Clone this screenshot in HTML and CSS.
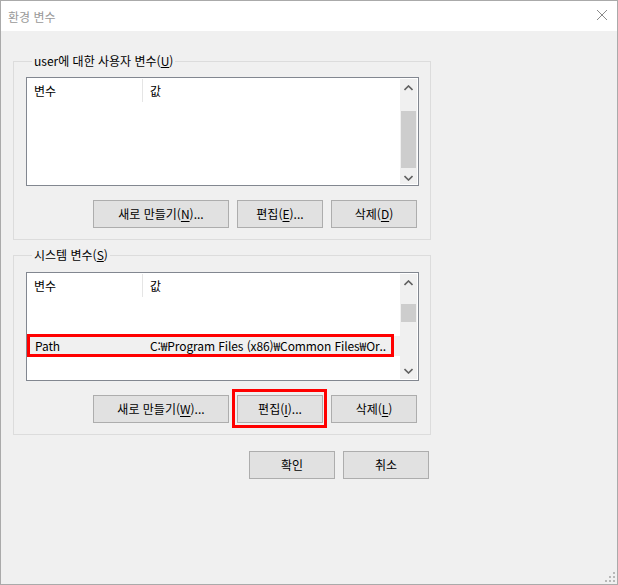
FILE: index.html
```html
<!DOCTYPE html>
<html lang="ko">
<head>
<meta charset="utf-8">
<title>환경 변수</title>
<link rel="stylesheet" href="styles.css">
</head>
<body>
<div class="window">
  <div class="titlebar">
    <span class="title">환경 변수</span>
    <svg class="close" width="12" height="12" viewBox="0 0 12 12"><path d="M1 1 L11 11 M11 1 L1 11" stroke="#8a8a8a" stroke-width="1" fill="none"/></svg>
  </div>
  <div class="content">
    <fieldset class="group group-user">
      <legend>user에 대한 사용자 변수(<u>U</u>)</legend>
      <div class="list">
        <div class="list-main">
          <div class="list-header">
            <div class="col-name">변수</div>
            <div class="col-value">값</div>
          </div>
        </div>
        <div class="scrollbar">
          <div class="arrow"><svg width="9" height="6" viewBox="0 0 9 6"><path d="M0.5 5 L4.5 1 L8.5 5" stroke="#606060" stroke-width="1.6" fill="none"/></svg></div>
          <div class="track track-user"><div class="thumb"></div></div>
          <div class="arrow"><svg width="9" height="6" viewBox="0 0 9 6"><path d="M0.5 1 L4.5 5 L8.5 1" stroke="#606060" stroke-width="1.6" fill="none"/></svg></div>
        </div>
      </div>
      <div class="btnrow">
        <button class="btn btn-wide">새로 만들기(<u>N</u>)...</button>
        <button class="btn">편집(<u>E</u>)...</button>
        <button class="btn">삭제(<u>D</u>)</button>
      </div>
    </fieldset>

    <fieldset class="group group-system">
      <legend>시스템 변수(<u>S</u>)</legend>
      <div class="list">
        <div class="list-main">
          <div class="list-header">
            <div class="col-name">변수</div>
            <div class="col-value">값</div>
          </div>
          <div class="row row-empty"></div>
          <div class="row row-empty"></div>
          <div class="row row-selected">
            <div class="col-name">Path</div>
            <div class="col-value">C:₩Program Files (x86)₩Common Files₩Or..</div>
          </div>
          <div class="mark mark-row"></div>
        </div>
        <div class="scrollbar">
          <div class="arrow"><svg width="9" height="6" viewBox="0 0 9 6"><path d="M0.5 5 L4.5 1 L8.5 5" stroke="#606060" stroke-width="1.6" fill="none"/></svg></div>
          <div class="track track-system"><div class="thumb"></div></div>
          <div class="arrow"><svg width="9" height="6" viewBox="0 0 9 6"><path d="M0.5 1 L4.5 5 L8.5 1" stroke="#606060" stroke-width="1.6" fill="none"/></svg></div>
        </div>
      </div>
      <div class="btnrow">
        <button class="btn btn-wide">새로 만들기(<u>W</u>)...</button>
        <span class="marked"><button class="btn">편집(<u>I</u>)...</button><span class="mark mark-btn"></span></span>
        <button class="btn">삭제(<u>L</u>)</button>
      </div>
    </fieldset>

    <div class="dialog-btns">
      <button class="btn">확인</button>
      <button class="btn">취소</button>
    </div>
  </div>
  <svg class="grip" width="10" height="10" viewBox="0 0 10 10">
    <rect x="8" y="0" width="2" height="2" fill="#b8b8b8"/>
    <rect x="4" y="4" width="2" height="2" fill="#b8b8b8"/>
    <rect x="8" y="4" width="2" height="2" fill="#b8b8b8"/>
    <rect x="0" y="8" width="2" height="2" fill="#b8b8b8"/>
    <rect x="4" y="8" width="2" height="2" fill="#b8b8b8"/>
    <rect x="8" y="8" width="2" height="2" fill="#b8b8b8"/>
  </svg>
</div>
</body>
</html>
```

FILE: styles.css
```css
* {
  box-sizing: border-box;
}

html, body {
  margin: 0;
  padding: 0;
  background: #f0f0f0;
}

body {
  font-family: "Noto Sans CJK KR", "Noto Sans", sans-serif;
  font-size: 12px;
  color: #000;
}

.window {
  position: relative;
  width: 618px;
  height: 585px;
  border: 1px solid #aaaaaa;
  background: #f0f0f0;
  overflow: hidden;
}

.titlebar {
  height: 30px;
  background: #ffffff;
  display: flex;
  align-items: center;
  justify-content: space-between;
  padding: 0 9px 0 7px;
}

.title {
  color: #999999;
  font-size: 12px;
  line-height: 16px;
  padding-top: 1px;
}

.close {
  display: block;
  margin-top: -2px;
}

.content {
  padding: 22px 0 0 12px;
}

.group {
  width: 418px;
  margin: 0;
  padding: 0 11px 11px 12px;
  border: 1px solid #dcdcdc;
  min-width: 0;
}

.group legend {
  margin-left: 6px;
  padding: 0 2px;
  font-size: 12px;
  line-height: 16px;
  color: #000;
}

.group-user .list {
  margin-top: 8px;
}

.group-system {
  margin-top: 7px;
}

.group-system .list {
  margin-top: 9px;
}

.list {
  height: 109px;
  border: 1px solid #828790;
  background: #ffffff;
  display: flex;
}

.list-main {
  position: relative;
  flex: 1;
  min-width: 0;
  padding-top: 1px;
}

.list-header {
  display: flex;
  height: 23px;
  align-items: center;
}

.col-name {
  width: 116px;
  padding-left: 7px;
  line-height: 16px;
  flex: none;
}

.list-header .col-name {
  border-right: 1px solid #e5e5e5;
  height: 23px;
  display: flex;
  align-items: center;
}

.col-value {
  padding-left: 7px;
  white-space: nowrap;
  overflow: hidden;
  line-height: 16px;
}

.row {
  display: flex;
  align-items: center;
  height: 20px;
}

.row-empty {
  height: 19px;
}

.row-selected {
  margin-top: 1px;
  background: #f0f0f0;
  height: 20px;
  letter-spacing: -0.1px;
}

.row-selected .col-name {
  padding-left: 8px;
}

.scrollbar {
  width: 17px;
  background: #f0f0f0;
  display: flex;
  flex-direction: column;
  flex: none;
  margin: 1px 1px 1px 0;
}

.arrow {
  height: 17px;
  display: flex;
  align-items: center;
  justify-content: center;
  flex: none;
}

.track {
  flex: 1;
  padding: 0 1px;
}

.track-user {
  padding-top: 15px;
  padding-bottom: 1px;
}

.track-user .thumb {
  height: 57px;
}

.track-system {
  padding-top: 13px;
}

.track-system .thumb {
  height: 18px;
}

.thumb {
  background: #cdcdcd;
  width: 15px;
}

.btnrow {
  display: flex;
  justify-content: flex-end;
  gap: 8px;
  margin-top: 14px;
  margin-right: 2px;
}

.btn {
  font-family: "Noto Sans CJK KR", "Noto Sans", sans-serif;
  font-size: 12px;
  line-height: 16px;
  color: #000;
  width: 86px;
  height: 28px;
  background: #e1e1e1;
  border: 1px solid #adadad;
  border-radius: 0;
  padding: 0;
  margin: 0;
}

.btn-wide {
  width: 136px;
}

.btn u {
  text-underline-offset: 2px;
}

.marked {
  position: relative;
  display: block;
}

.mark {
  position: absolute;
  border: 3px solid #ff0000;
  pointer-events: none;
}

.mark-btn {
  left: -5px;
  top: -6px;
  right: -4px;
  bottom: -5px;
}

.mark-row {
  left: 0px;
  top: 61px;
  width: 367px;
  height: 23px;
}

.dialog-btns {
  display: flex;
  justify-content: flex-end;
  gap: 8px;
  width: 416px;
  margin-top: 16px;
}

.grip {
  position: absolute;
  right: 2px;
  bottom: 2px;
}
```
